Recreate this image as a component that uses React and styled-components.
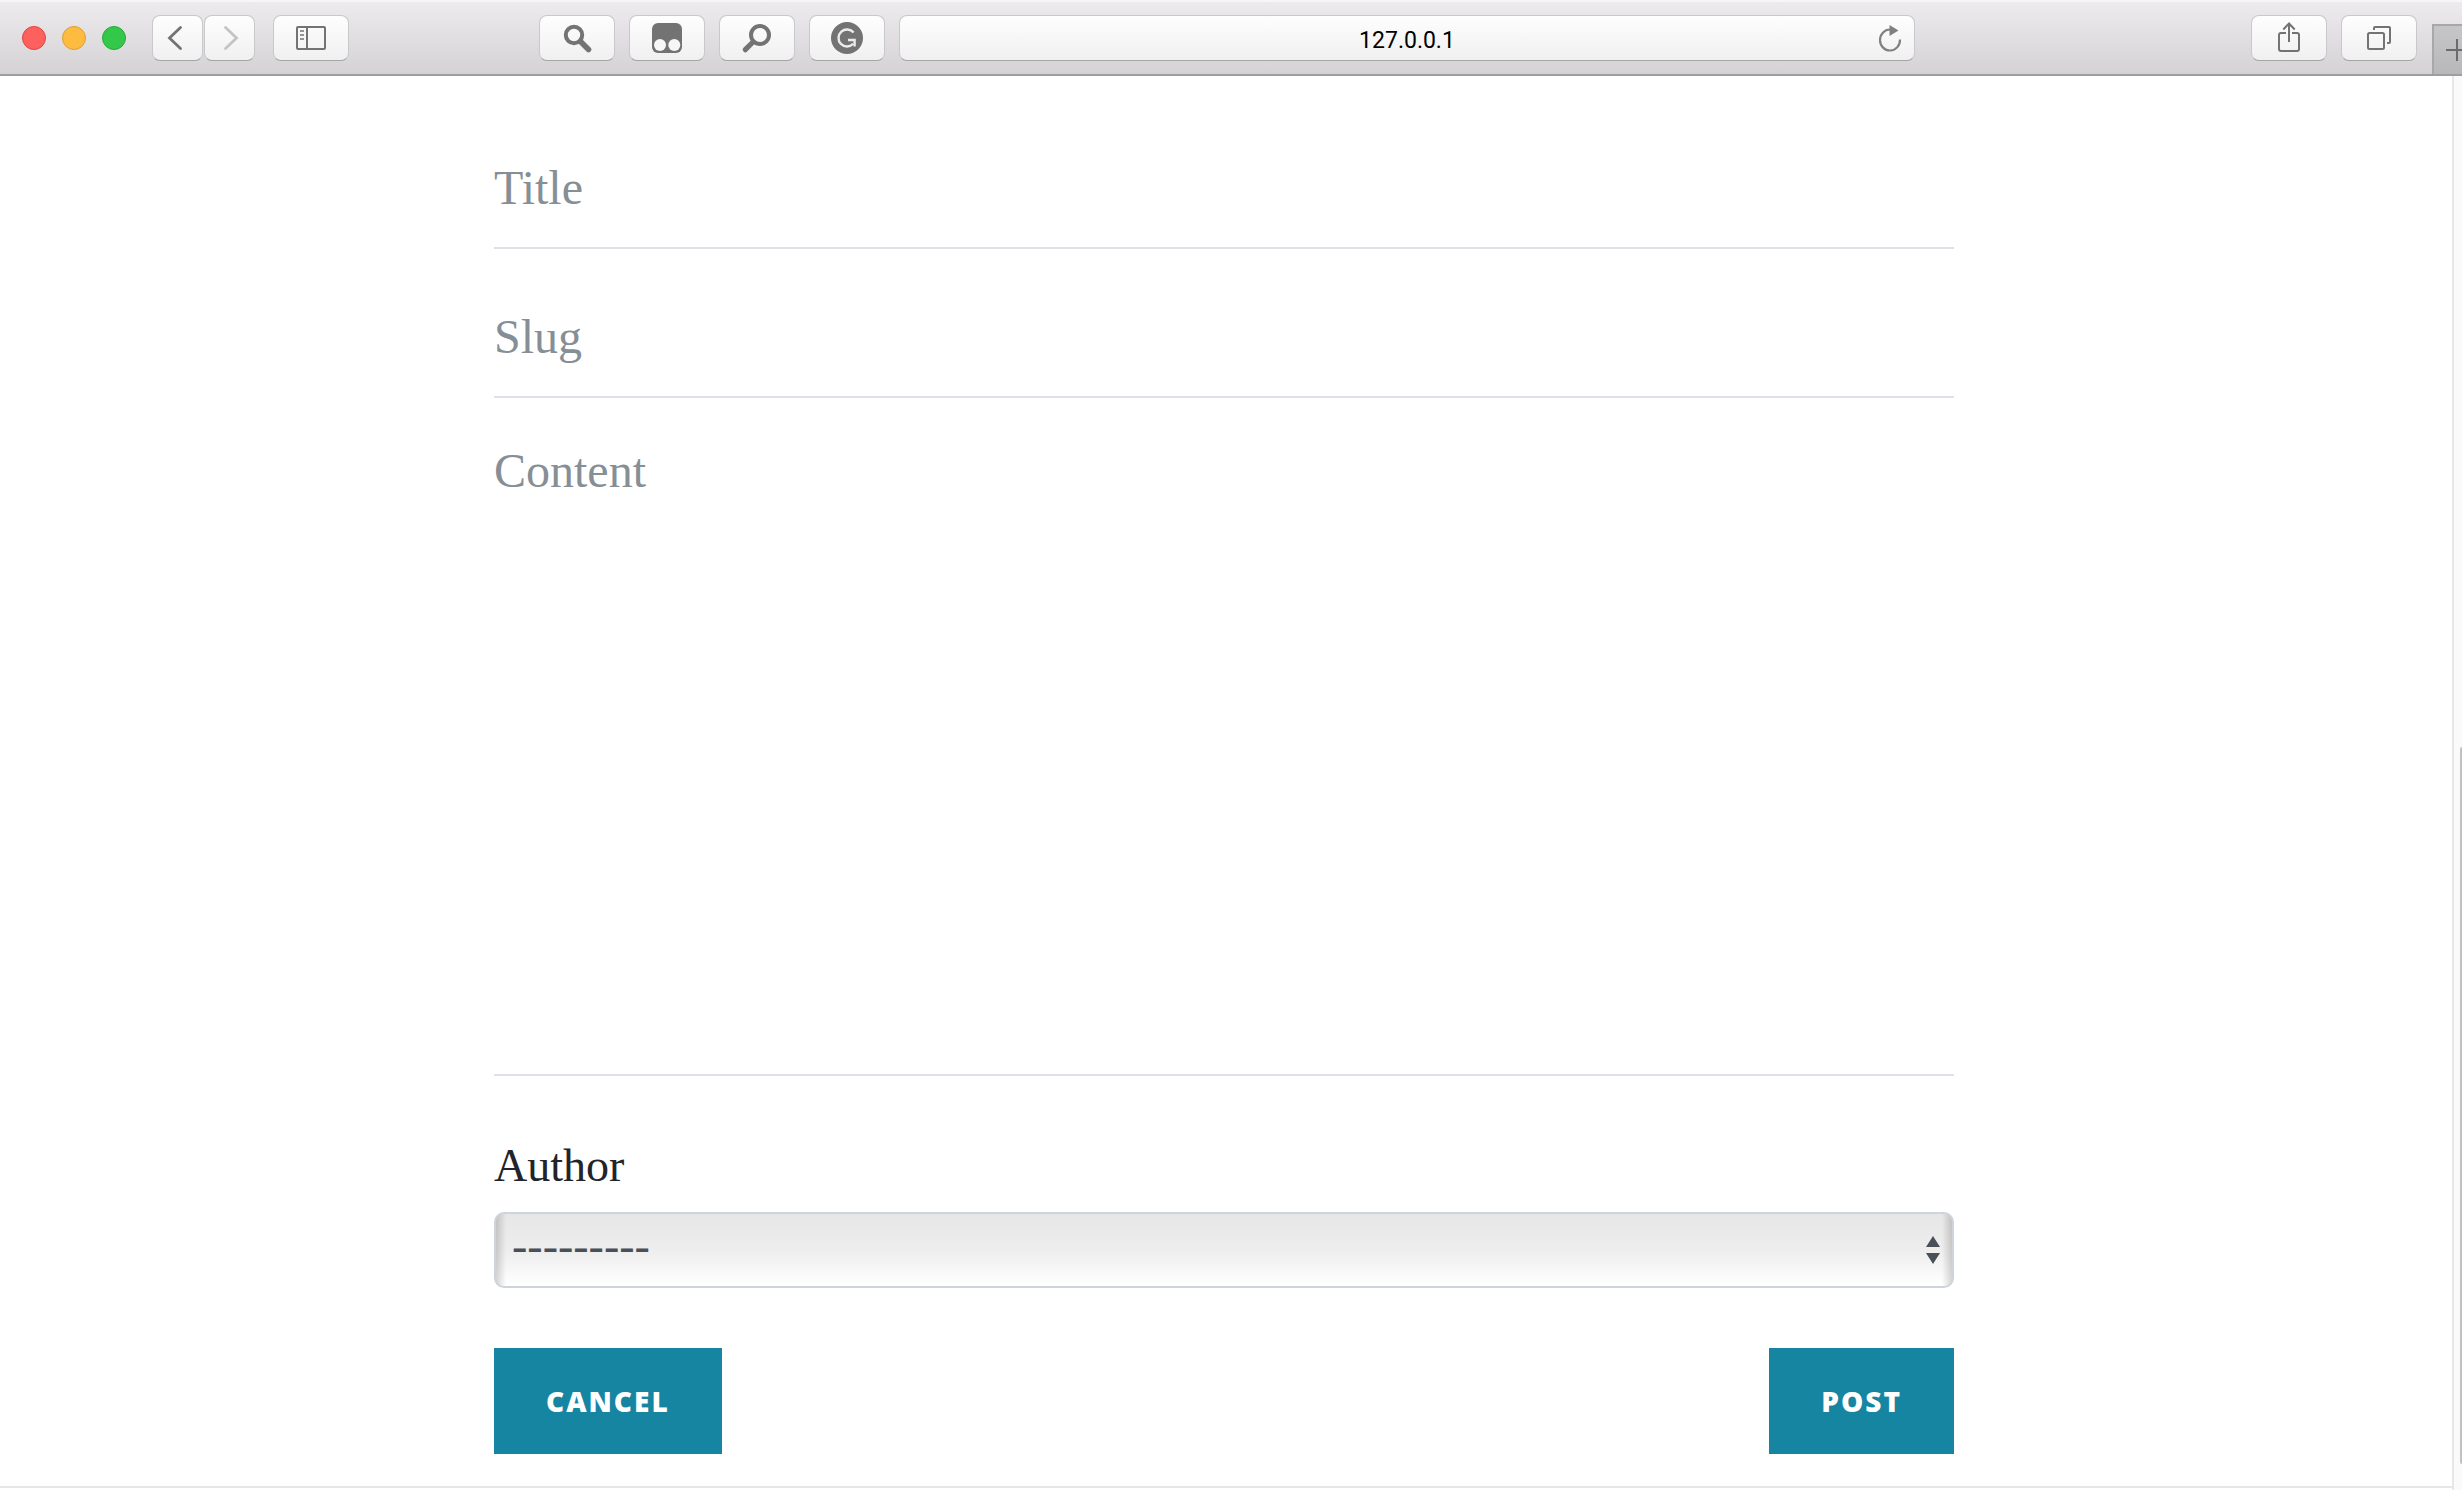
import React from "react";
import styled, { createGlobalStyle, css } from "styled-components";

const GlobalStyle = createGlobalStyle`
  *, *::before, *::after { box-sizing: border-box; }
  body { margin: 0; background: #fff; }
  button, input, textarea, select { margin: 0; font: inherit; }
`;

const serif = `"Liberation Serif", serif`;
const chromeFace = css`
  background: linear-gradient(#fefefe, #f0f0f0);
  border: 1px solid #c9c8ca;
  border-bottom-color: #a5a4a6;
  border-radius: 8px;
`;

const Window = styled.div`
  display: flex;
  flex-direction: column;
  min-height: 100vh;
`;

const Titlebar = styled.header`
  display: flex;
  height: 76px;
  background: linear-gradient(#edebee, #d4d2d5);
  border-top: 2px solid #f6f5f7;
  border-bottom: 2px solid #9e9d9f;
`;

const Toolbar = styled.div`
  display: flex;
  flex: 1;
  align-items: center;
  min-width: 0;
  padding-left: 22px;
`;

const LeftTools = styled.div`
  display: flex;
  flex: 1;
  align-items: center;
  gap: 18px;
`;

const Lights = styled.div`
  display: flex;
  gap: 16px;
  margin-right: 8px;
`;

const Light = styled.button`
  width: 24px;
  height: 24px;
  padding: 0;
  border: 1px solid ${(p) => p.$edge};
  border-radius: 50%;
  background: ${(p) => p.$fill};
`;

const History = styled.nav`
  display: flex;
  gap: 1px;
`;

const ToolButton = styled.button`
  ${chromeFace}
  display: flex;
  flex: none;
  align-items: center;
  justify-content: center;
  width: ${(p) => (p.$narrow ? 51 : 76)}px;
  height: 46px;
  padding: 0;
  color: #737373;

  &:disabled { color: #c4c4c4; }
`;

const Icon = styled.svg`
  display: block;
  flex: none;
  fill: none;
  stroke: currentColor;
  stroke-width: 2;
`;

const CenterTools = styled.div`
  display: flex;
  flex: 0 1 1376px;
  gap: 14px;
  min-width: 0;
`;

const Address = styled.div`
  ${chromeFace}
  display: grid;
  flex: 1;
  grid-template-columns: 48px 1fr 48px;
  height: 46px;
  min-width: 0;
`;

const AddressInput = styled.input`
  grid-column: 2;
  min-width: 0;
  padding: 2px 0 0;
  border: 0;
  outline: 0;
  background: transparent;
  color: #000;
  font-family: Roboto, sans-serif;
  font-size: 23px;
  text-align: center;
`;

const Reload = styled.button`
  display: flex;
  align-items: center;
  justify-content: center;
  padding: 0;
  border: 0;
  background: transparent;
  color: #808080;
`;

const RightTools = styled.div`
  display: flex;
  flex: 1;
  justify-content: flex-end;
  gap: 14px;

  & > :last-child { margin-right: 15px; }
`;

const NewTab = styled.button`
  display: flex;
  flex: none;
  align-self: flex-end;
  align-items: center;
  width: 30px;
  height: 50px;
  padding: 0 0 0 12px;
  overflow: hidden;
  border: 0;
  border-top: 2px solid #a8a7a9;
  border-left: 2px solid #a8a7a9;
  background: linear-gradient(#c6c5c7, #b8b7b9);
  color: #6b6a6c;
`;

const Viewport = styled.div`
  display: flex;
  flex: 1;
`;

const Page = styled.div`
  flex: 1;
  min-width: 0;
`;

const Main = styled.main`
  padding: 83px 4px 32px 0;
  border-bottom: 2px solid #e6e6e6;
`;

const Form = styled.form`
  display: flex;
  flex-direction: column;
  width: 100%;
  max-width: 1460px;
  margin: 0 auto;
`;

const fieldStyle = css`
  display: block;
  width: 100%;
  border: 0;
  border-bottom: 2px solid #dee2e6;
  border-radius: 0;
  outline: 0;
  background: transparent;
  color: #212529;
  font-family: ${serif};
  font-size: 48px;
  line-height: 56px;

  &::placeholder {
    color: #868e96;
    opacity: 1;
  }
`;

const TextInput = styled.input`
  ${fieldStyle}
  height: 90px;
  padding: 0 0 32px;
  margin-bottom: ${(p) => p.$gap}px;
`;

const TextArea = styled.textarea`
  ${fieldStyle}
  height: 633px;
  padding: 0;
  margin-bottom: 62px;
  resize: none;
`;

const Label = styled.label`
  margin-bottom: 18px;
  color: #212529;
  font-family: ${serif};
  font-size: 46px;
  line-height: 56px;
`;

const SelectBox = styled.div`
  position: relative;
  margin-bottom: 60px;
`;

const Select = styled.select`
  display: block;
  width: 100%;
  height: 76px;
  padding: 0 44px 10px 16px;
  border: 2px solid #ced4da;
  border-radius: 10px;
  outline: 0;
  appearance: none;
  background:
    linear-gradient(to right, rgba(0, 0, 0, 0.16), transparent 10px),
    linear-gradient(to left, rgba(0, 0, 0, 0.16), transparent 10px),
    linear-gradient(#e6e6e6, #eeeeee 52%, #fff);
  color: #495057;
  font-family: ${serif};
  font-size: 46px;
`;

const Arrows = styled.svg`
  position: absolute;
  top: 23px;
  right: 14px;
  fill: #495057;
  pointer-events: none;
`;

const Actions = styled.div`
  display: flex;
  justify-content: space-between;
`;

const ActionButton = styled.button`
  height: 106px;
  padding: 0 52px;
  border: 0;
  background: #1585a1;
  color: #fff;
  font-family: "Open Sans", sans-serif;
  font-size: 28px;
  font-weight: 800;
  letter-spacing: 2px;
  text-transform: uppercase;
`;

const Scrollbar = styled.div`
  display: flex;
  flex: none;
  flex-direction: column;
  align-items: flex-end;
  width: 10px;
  border-left: 2px solid #e7e7e7;
  background: #fafafa;

  &::before {
    content: "";
    flex: 671;
  }

  &::after {
    content: "";
    flex: 26;
  }
`;

const Thumb = styled.div`
  flex: 717;
  width: 2px;
  border-radius: 2px 0 0 2px;
  background: #c1c1c1;
`;

function ToolIcon({ width = 76, children }) {
  return (
    <Icon width={width} height="46" viewBox={`0 0 ${width} 46`} aria-hidden="true">
      {children}
    </Icon>
  );
}

export default function App() {
  return (
    <Window>
      <GlobalStyle />
      <Titlebar>
        <Toolbar>
          <LeftTools>
            <Lights>
              <Light type="button" aria-label="Close" $fill="#fc615d" $edge="#e0443f" />
              <Light type="button" aria-label="Minimize" $fill="#fdbc40" $edge="#df9d33" />
              <Light type="button" aria-label="Zoom" $fill="#34c84a" $edge="#27aa35" />
            </Lights>
            <History aria-label="History">
              <ToolButton type="button" $narrow aria-label="Back">
                <ToolIcon width={51}>
                  <path d="M28.5 12.5 17.5 23l11 10.5" strokeWidth="2.8" strokeLinecap="round" />
                </ToolIcon>
              </ToolButton>
              <ToolButton type="button" $narrow disabled aria-label="Forward">
                <ToolIcon width={51}>
                  <path d="M21.5 12.5 32.5 23l-11 10.5" strokeWidth="2.8" strokeLinecap="round" />
                </ToolIcon>
              </ToolButton>
            </History>
            <ToolButton type="button" aria-label="Sidebar">
              <ToolIcon>
                <rect x="24" y="12" width="28" height="22" rx="1" />
                <path d="M34 12v22" />
                <path d="M27 16h4M27 20h4M27 24h4" strokeWidth="1.6" />
              </ToolIcon>
            </ToolButton>
          </LeftTools>

          <CenterTools>
            <ToolButton type="button" aria-label="Search">
              <ToolIcon>
                <circle cx="35" cy="20" r="8.2" strokeWidth="4" />
                <path d="M41.5 26.5 49.5 34.5" strokeWidth="5.6" strokeLinecap="round" />
              </ToolIcon>
            </ToolButton>
            <ToolButton type="button" aria-label="User scripts">
              <ToolIcon>
                <rect x="23" y="8" width="30" height="30" rx="6" fill="currentColor" stroke="none" />
                <circle cx="31" cy="30" r="6" fill="#f6f6f6" stroke="none" />
                <circle cx="45.3" cy="30" r="6" fill="#f6f6f6" stroke="none" />
              </ToolIcon>
            </ToolButton>
            <ToolButton type="button" aria-label="Find">
              <ToolIcon>
                <circle cx="41" cy="20" r="9" strokeWidth="4" />
                <path d="M34 27 26.3 34.7" strokeWidth="5.2" strokeLinecap="round" />
              </ToolIcon>
            </ToolButton>
            <ToolButton type="button" aria-label="Grammar check">
              <ToolIcon>
                <circle cx="38" cy="23" r="16" fill="currentColor" stroke="none" />
                <path d="M44.6 17.6A8.5 8.5 0 1 0 44.2 28.8" stroke="#ececec" strokeWidth="2.4" />
                <path d="M39 25h6.6v6.5" stroke="#ececec" strokeWidth="2.4" />
              </ToolIcon>
            </ToolButton>
            <Address>
              <AddressInput type="text" aria-label="Address" defaultValue="127.0.0.1" />
              <Reload type="button" aria-label="Reload">
                <ToolIcon width={48}>
                  <path d="M34 23.5A10 10.5 0 1 1 24 13.5" strokeWidth="2.2" />
                  <path d="M23.5 9 32.5 14.5 23.5 20z" fill="currentColor" stroke="none" />
                </ToolIcon>
              </Reload>
            </Address>
          </CenterTools>

          <RightTools>
            <ToolButton type="button" aria-label="Share">
              <ToolIcon>
                <path d="M35 18h-5a2 2 0 0 0-2 2v14a2 2 0 0 0 2 2h16a2 2 0 0 0 2-2V20a2 2 0 0 0-2-2h-5" />
                <path d="M38 27V8.5M32.3 14.5 38 8.5l5.7 6" />
              </ToolIcon>
            </ToolButton>
            <ToolButton type="button" aria-label="Show all tabs">
              <ToolIcon>
                <rect x="27" y="18" width="16" height="16" rx="1.5" />
                <path d="M33 15v-2a1 1 0 0 1 1-1h14a1 1 0 0 1 1 1v14a1 1 0 0 1-1 1h-2" />
              </ToolIcon>
            </ToolButton>
          </RightTools>
        </Toolbar>
        <NewTab type="button" aria-label="New tab">
          <Icon width="22" height="22" viewBox="0 0 22 22" aria-hidden="true">
            <path d="M11 0v22M0 11h22" />
          </Icon>
        </NewTab>
      </Titlebar>

      <Viewport>
        <Page>
          <Main>
            <Form onSubmit={(event) => event.preventDefault()}>
              <TextInput type="text" aria-label="Title" placeholder="Title" $gap={59} />
              <TextInput type="text" aria-label="Slug" placeholder="Slug" $gap={45} />
              <TextArea aria-label="Content" placeholder="Content" />
              <Label htmlFor="author">Author</Label>
              <SelectBox>
                <Select id="author" defaultValue="">
                  <option value="">---------</option>
                </Select>
                <Arrows width="14" height="30" viewBox="0 0 14 30" aria-hidden="true">
                  <path d="M7 1l7 11H0zM7 29L0 18h14z" />
                </Arrows>
              </SelectBox>
              <Actions>
                <ActionButton type="button">Cancel</ActionButton>
                <ActionButton type="submit">Post</ActionButton>
              </Actions>
            </Form>
          </Main>
        </Page>
        <Scrollbar aria-hidden="true">
          <Thumb />
        </Scrollbar>
      </Viewport>
    </Window>
  );
}
